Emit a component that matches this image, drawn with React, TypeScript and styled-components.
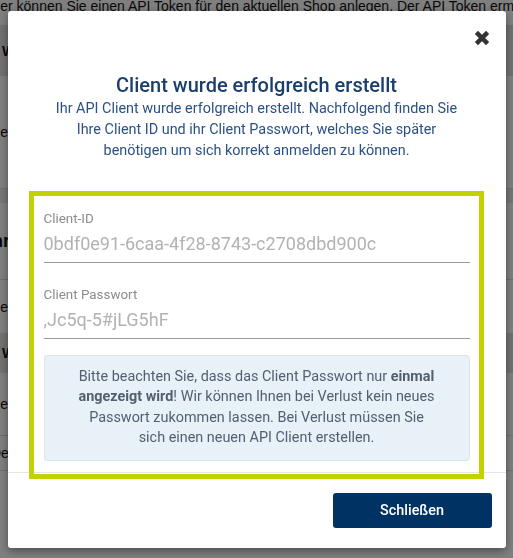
import styled, { createGlobalStyle } from "styled-components";

const GlobalStyle = createGlobalStyle`
  html, body {
    margin: 0;
    padding: 0;
  }
  body {
    font-family: "Liberation Sans", Arial, sans-serif;
    background: #ffffff;
    overflow: hidden;
  }
`;

// the shop page that lies under the dialog
const Page = styled.div`
  width: 560px;
  margin: -4px 0 0 -13px;
  color: #111111;
  font-size: 14px;
  line-height: 20px;
`;

const PageText = styled.p`
  margin: 0 0 9px;
  white-space: nowrap;
`;

const TableHead = styled.div<{ $h: number }>`
  display: flex;
  align-items: center;
  height: ${(p) => p.$h}px;
  padding-left: 15px;
  background: #e2e2e2;
  font-weight: 600;
  white-space: nowrap;
`;

const TableRow = styled.div<{ $h: number }>`
  display: flex;
  align-items: center;
  height: ${(p) => p.$h}px;
  padding-left: 4px;
  border-bottom: 1px solid #dddddd;
  white-space: nowrap;
`;

const Strip = styled.div`
  height: 14px;
  background: #ececec;
`;

const SectionTitle = styled.h3`
  margin: 0;
  height: 76px;
  display: flex;
  align-items: center;
  font-size: 18px;
  border-bottom: 1px solid #dddddd;
  white-space: nowrap;
`;

const SectionText = styled.p`
  margin: 0;
  height: 53px;
  display: flex;
  align-items: center;
  white-space: nowrap;
`;

// dialog
const Backdrop = styled.div`
  position: fixed;
  inset: 0;
  background: rgba(0, 0, 0, 0.5);
  display: flex;
  align-items: center;
  justify-content: center;
`;

const Modal = styled.div`
  width: 498px;
  background: #ffffff;
  border-radius: 3px;
  box-shadow: 0 3px 9px rgba(0, 0, 0, 0.4);
  display: flex;
  flex-direction: column;
  font-family: Roboto, "Liberation Sans", sans-serif;
`;

const Header = styled.div`
  display: flex;
  justify-content: flex-end;
  padding: 19px 16px 0;
`;

const CloseButton = styled.button`
  width: 16px;
  height: 16px;
  padding: 0;
  border: 0;
  background: none;
  cursor: pointer;
  display: flex;
`;

const Body = styled.div`
  padding: 27px 36px 11px;
`;

const Title = styled.h4`
  margin: 0;
  text-align: center;
  font-size: 20px;
  font-weight: 500;
  line-height: 24px;
  color: #1b3f6d;
`;

const Description = styled.p`
  margin: 1px 0 0;
  text-align: center;
  font-size: 14.4px;
  line-height: 21px;
  color: #2b5184;
`;

const Fields = styled.div`
  position: relative;
  margin-top: 50px;

  &::after {
    content: "";
    position: absolute;
    top: -20px;
    bottom: -18px;
    left: -15px;
    right: -14px;
    border: 5px solid #c5d000;
    pointer-events: none;
  }
`;

const Field = styled.div`
  margin-bottom: 24px;
`;

const Label = styled.div`
  font-size: 13.4px;
  line-height: 16px;
  color: #8c8c8c;
`;

const Value = styled.div`
  margin-top: 5px;
  padding-bottom: 6px;
  border-bottom: 1px solid #9a9a9a;
  font-size: 18px;
  line-height: 24px;
  color: #b2b2b2;
`;

const InfoBox = styled.div`
  margin-top: -8px;
  padding: 11px 16px;
  background: #e8f0f8;
  border: 1px solid #dbe5ef;
  border-radius: 3px;
  text-align: center;
  font-size: 14.4px;
  line-height: 20.5px;
  color: #536070;

  b {
    font-weight: 700;
  }
`;

const Footer = styled.div`
  display: flex;
  justify-content: flex-end;
  padding: 20px 14px;
  border-top: 1px solid #e5e5e5;
`;

const PrimaryButton = styled.button`
  width: 159px;
  height: 35px;
  border: 0;
  border-radius: 3px;
  background: #003264;
  color: #ffffff;
  font-family: Roboto, "Liberation Sans", sans-serif;
  font-size: 14.4px;
  font-weight: 500;
  cursor: pointer;
`;

function CloseIcon() {
  return (
    <svg width="16" height="16" viewBox="0 0 16 16">
      <path
        d="M2.4 2.4 L13.6 13.6 M13.6 2.4 L2.4 13.6"
        stroke="#333333"
        strokeWidth="4.4"
        fill="none"
      />
    </svg>
  );
}

export default function App() {
  return (
    <>
      <GlobalStyle />
      <Page>
        <PageText>
          Hier können Sie einen API Token für den aktuellen Shop anlegen. Der API
          Token ermöglicht den Zugriff auf die Schnittstelle.
        </PageText>
        <TableHead $h={51}>Wert</TableHead>
        <TableRow $h={112}>Benutzer</TableRow>
        <Strip />
        <SectionTitle>Ihre API Clients</SectionTitle>
        <SectionText>
          Hier können Sie einen API Client für den aktuellen Shop anlegen und
          verwalten.
        </SectionText>
        <TableHead $h={40}>Wert</TableHead>
        <TableRow $h={62}>Beschreibung</TableRow>
        <TableRow $h={34}>Deckung</TableRow>
      </Page>

      <Backdrop>
        <Modal>
          <Header>
            <CloseButton aria-label="Schließen">
              <CloseIcon />
            </CloseButton>
          </Header>
          <Body>
            <Title>Client wurde erfolgreich erstellt</Title>
            <Description>
              Ihr API Client wurde erfolgreich erstellt. Nachfolgend finden Sie
              <br />
              Ihre Client ID und ihr Client Passwort, welches Sie später
              <br />
              benötigen um sich korrekt anmelden zu können.
            </Description>
            <Fields>
              <Field>
                <Label>Client-ID</Label>
                <Value>0bdf0e91-6caa-4f28-8743-c2708dbd900c</Value>
              </Field>
              <Field>
                <Label>Client Passwort</Label>
                <Value>,Jc5q-5#jLG5hF</Value>
              </Field>
              <InfoBox>
                Bitte beachten Sie, dass das Client Passwort nur <b>einmal</b>
                <br />
                <b>angezeigt wird</b>! Wir können Ihnen bei Verlust kein neues
                <br />
                Passwort zukommen lassen. Bei Verlust müssen Sie
                <br />
                sich einen neuen API Client erstellen.
              </InfoBox>
            </Fields>
          </Body>
          <Footer>
            <PrimaryButton>Schließen</PrimaryButton>
          </Footer>
        </Modal>
      </Backdrop>
    </>
  );
}
